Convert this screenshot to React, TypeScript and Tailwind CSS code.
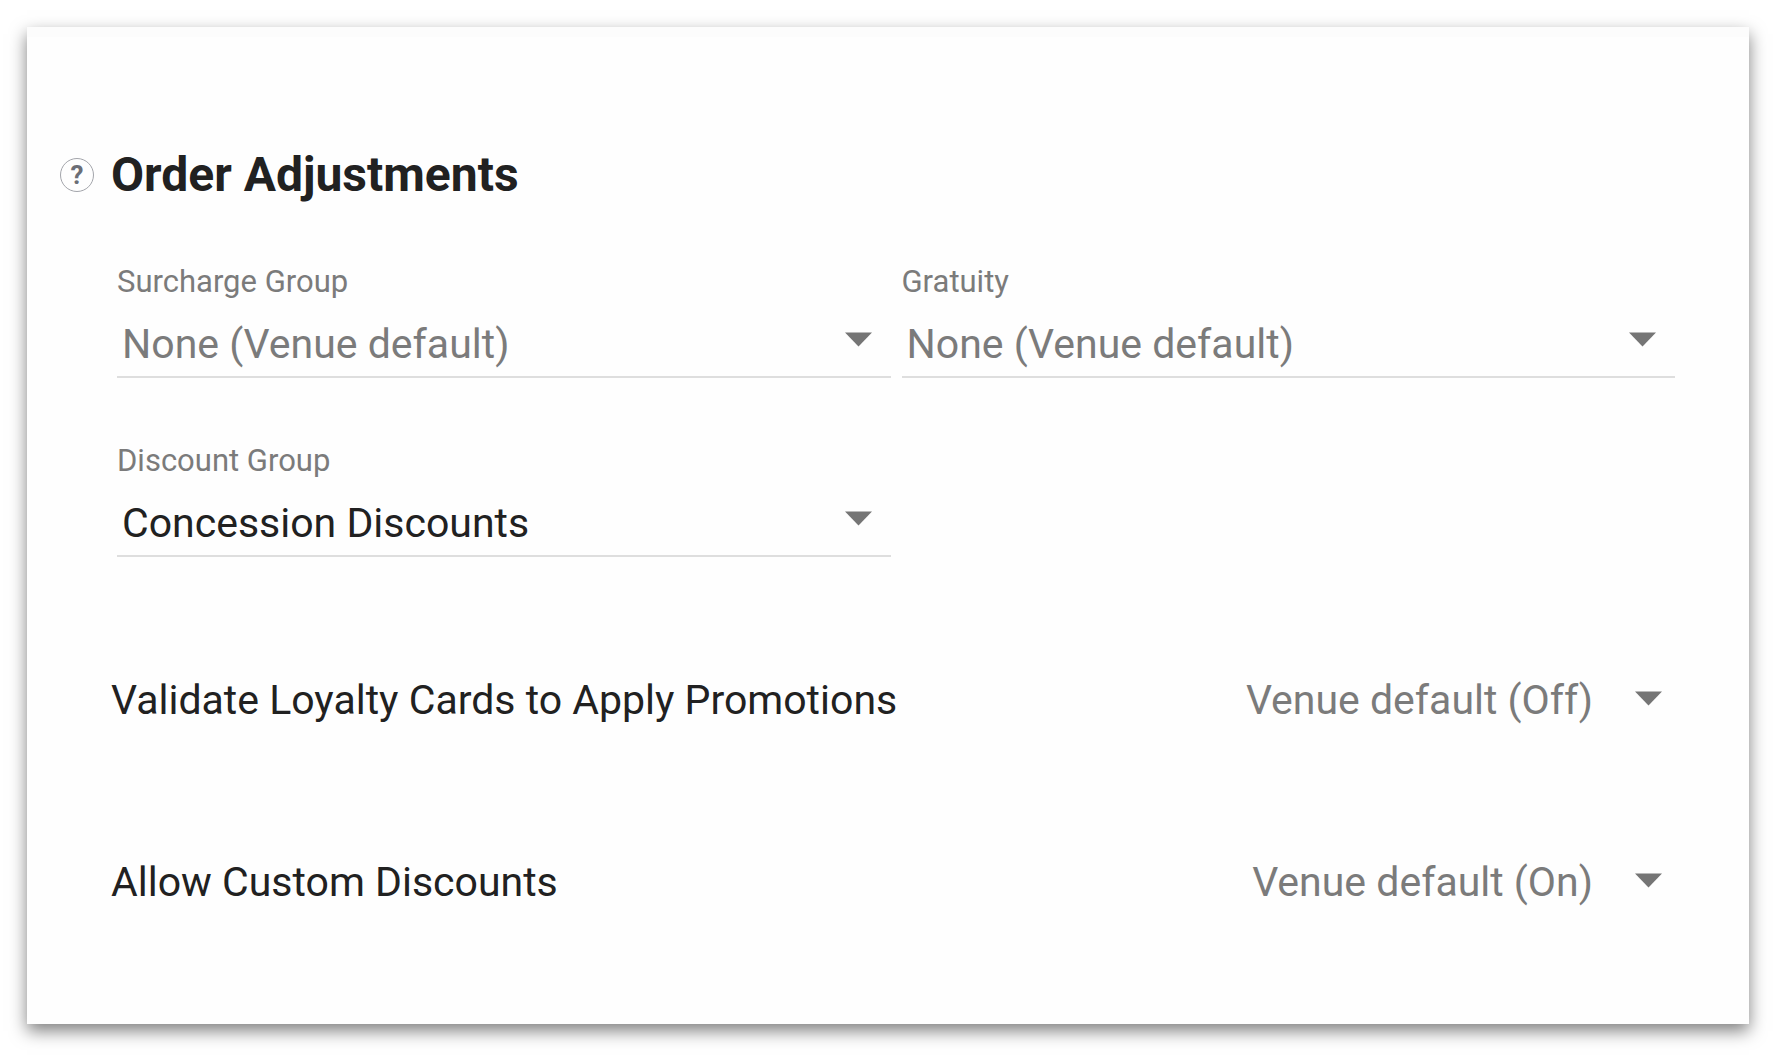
import React, { useId, useState } from 'react';

type SelectProps = {
  label: string;
  options: string[];
  initial: string;
};

const Caret: React.FC<{ className: string }> = ({ className }) => (
  <svg
    width="27"
    height="15"
    viewBox="0 0 27 15"
    className={`pointer-events-none absolute fill-[#757575] ${className}`}
    aria-hidden="true"
  >
    <path d="M0 0.5h27L13.5 14.5z" />
  </svg>
);

const isDefault = (value: string) => value.includes('default');

const SelectField: React.FC<SelectProps> = ({ label, options, initial }) => {
  const id = useId();
  const [value, setValue] = useState(initial);

  return (
    <div className="flex flex-col">
      <label htmlFor={id} className="text-[31px] leading-10 text-[#7b7b7b]">
        {label}
      </label>
      <div className="relative mt-[10px]">
        <select
          id={id}
          value={value}
          onChange={(e) => setValue(e.target.value)}
          className={`block h-[66px] w-full appearance-none border-b-2 border-[#dedede] bg-transparent pr-16 pl-[5px] text-[41px] leading-[64px] outline-none ${
            isDefault(value) ? 'text-[#7b7b7b]' : 'text-[#212121]'
          }`}
        >
          {options.map((option) => (
            <option key={option}>{option}</option>
          ))}
        </select>
        <Caret className="top-5 right-[19px]" />
      </div>
    </div>
  );
};

const SettingRow: React.FC<SelectProps> = ({ label, options, initial }) => {
  const id = useId();
  const [value, setValue] = useState(initial);

  return (
    <div className="flex items-center justify-between">
      <label htmlFor={id} className="text-[41px] leading-[64px] text-[#212121]">
        {label}
      </label>
      <div className="relative">
        <select
          id={id}
          value={value}
          onChange={(e) => setValue(e.target.value)}
          className="block h-16 w-[440px] appearance-none bg-transparent pr-[82px] text-right text-[41px] leading-[64px] text-[#7b7b7b] outline-none [text-align-last:right]"
        >
          {options.map((option) => (
            <option key={option}>{option}</option>
          ))}
        </select>
        <Caret className="top-[23px] right-[13px]" />
      </div>
    </div>
  );
};

const App: React.FC = () => {
  return (
    <main className="min-h-screen bg-white pt-[27px] pr-[39px] pb-[34px] pl-[27px] font-['Roboto',sans-serif]">
      <section className="border-t-[10px] border-[#fcfcfc] bg-[#fefefe] pt-[110px] pr-[74px] pb-[110px] pl-[33px] shadow-[0_7px_16px_rgba(0,0,0,0.5)]">
        <header className="flex items-center gap-[17px]">
          <button
            type="button"
            aria-label="About order adjustments"
            className="flex size-[34px] items-center justify-center rounded-full border border-[#a3a5ab] text-[26px] font-bold text-[#6b6e76]"
          >
            ?
          </button>
          <h1 className="text-5xl leading-[56px] font-bold text-[#212121]">Order Adjustments</h1>
        </header>

        <div className="mt-[59px] grid grid-cols-2 gap-x-[11px] gap-y-[63px] pl-[57px]">
          <SelectField
            label="Surcharge Group"
            initial="None (Venue default)"
            options={['None (Venue default)', 'Surcharges']}
          />
          <SelectField
            label="Gratuity"
            initial="None (Venue default)"
            options={['None (Venue default)', 'Gratuity']}
          />
          <SelectField
            label="Discount Group"
            initial="Concession Discounts"
            options={['None (Venue default)', 'Concession Discounts']}
          />
        </div>

        <div className="mt-[111px] flex flex-col gap-[118px] pl-[51px]">
          <SettingRow
            label="Validate Loyalty Cards to Apply Promotions"
            initial="Venue default (Off)"
            options={['Venue default (Off)', 'On', 'Off']}
          />
          <SettingRow
            label="Allow Custom Discounts"
            initial="Venue default (On)"
            options={['Venue default (On)', 'On', 'Off']}
          />
        </div>
      </section>
    </main>
  );
};

export default App;
